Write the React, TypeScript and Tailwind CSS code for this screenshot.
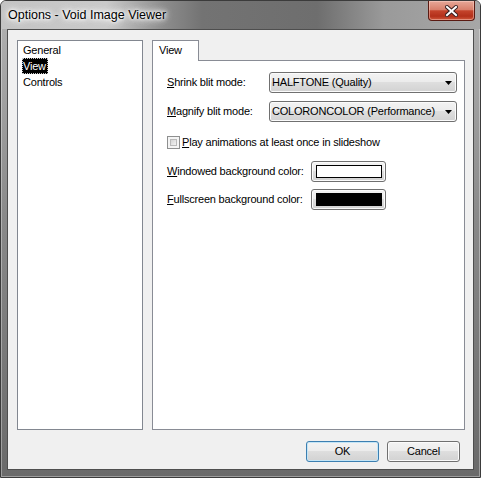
import type { ReactNode } from 'react';

const sans = "font-['Liberation_Sans',Arial,sans-serif]";

function WinButton({ children, className = '', focused = false }: { children: ReactNode; className?: string; focused?: boolean }) {
  return (
    <div
      className={`h-[21px] rounded-[3px] border flex items-center justify-center bg-[linear-gradient(to_bottom,#f3f3f3_0%,#ececec_45%,#dedede_50%,#d2d2d2_100%)] ${
        focused
          ? 'border-[#3c7fb1] shadow-[inset_0_0_0_1px_#c4e5f6]'
          : 'border-[#707070] shadow-[inset_0_0_0_1px_#fbfbfb]'
      } ${className}`}
    >
      {children}
    </div>
  );
}

function Combo({ value }: { value: string }) {
  return (
    <WinButton className="w-[188px] !justify-between pl-[2px] pr-[4px]">
      <span className="text-[11px] text-black leading-none">{value}</span>
      <svg width="7" height="4" viewBox="0 0 7 4">
        <path d="M0 0h7L3.5 4z" fill="#000" />
      </svg>
    </WinButton>
  );
}

function ColorButton({ color }: { color: string }) {
  return (
    <WinButton className="w-[75px]">
      <div className="w-[66px] h-[13px] border border-black" style={{ backgroundColor: color }} />
    </WinButton>
  );
}

export default function App() {
  const items = ['General', 'View', 'Controls'];

  return (
    <div className={`w-[481px] h-[478px] bg-white ${sans}`}>
      <div className="w-full h-full flex flex-col rounded-t-[6px] border border-[#3b3b3b] overflow-hidden bg-[linear-gradient(to_bottom,#b4b4b4_0%,#8a8a8a_45%,#6a6a6a_100%)] shadow-[inset_0_0_0_1px_rgba(255,255,255,0.35)]">
        {/* title bar */}
        <div className="h-[28px] shrink-0 flex justify-between bg-[linear-gradient(to_right,#c4c4c4_0%,#cacaca_22%,#8d8d8d_34%,#737373_42%,#6e6e6e_66%,#9a9a9a_80%,#a7a7a7_100%)]">
          <span className="pl-[7px] self-center pt-[1px] text-[12.5px] text-black [text-shadow:0_0_8px_#fff,0_0_8px_#fff,0_0_5px_#fff,0_0_3px_#fff]">
            Options - Void Image Viewer
          </span>
          <div className="mr-[5px] w-[47px] h-[20px] rounded-b-[4px] border border-t-0 border-[#5a1a12] flex items-center justify-center bg-[linear-gradient(to_bottom,#e6a898_0%,#d8806c_45%,#c4432b_52%,#b3301a_80%,#d0583c_100%)] shadow-[inset_0_0_0_1px_rgba(255,220,210,0.45)]">
            <svg width="13" height="12" viewBox="0 0 13 12">
              <path d="M2 2l9 8M11 2l-9 8" stroke="#3a2020" strokeWidth="4" strokeLinecap="square" />
              <path d="M2 2l9 8M11 2l-9 8" stroke="#ffffff" strokeWidth="2" strokeLinecap="square" />
            </svg>
          </div>
        </div>

        {/* frame sides */}
        <div className="flex-1 px-[6px] pb-[7px]">
          <div className="w-full h-full border border-[#4e4e4e] bg-[#f0f0f0] flex flex-col pt-[10px] pl-[9px] text-[11px] tracking-[-0.2px] text-black">
            <div className="flex">
              <div className="w-[126px] h-[390px] border border-[#828790] bg-white pt-[1px] pl-[4px]">
                {items.map((item) => (
                  <div key={item} className="h-[16px] flex items-center">
                    <span
                      className={`h-[16px] leading-[14px] pl-[0px] pr-[1px] border border-dotted ${
                        item === 'View' ? 'bg-black text-white border-[#c8c8c8]' : 'border-transparent'
                      }`}
                    >
                      {item}
                    </span>
                  </div>
                ))}
              </div>

              <div className="ml-[9px] flex flex-col">
                <div className="relative z-10 -mb-px w-[47px] h-[21px] border border-b-0 border-[#898c95] bg-white pl-[6px] pt-[3px] leading-[13px]">
                  View
                </div>
                <div className="w-[313px] h-[370px] border border-[#898c95] bg-white pl-[14px] pt-[11px]">
                  <div className="flex items-center h-[21px]">
                    <span className="w-[102px]">
                      <u>S</u>hrink blit mode:
                    </span>
                    <Combo value="HALFTONE (Quality)" />
                  </div>
                  <div className="flex items-center h-[21px] mt-[8px]">
                    <span className="w-[102px]">
                      <u>M</u>agnify blit mode:
                    </span>
                    <Combo value="COLORONCOLOR (Performance)" />
                  </div>
                  <div className="flex items-center h-[13px] mt-[14px]">
                    <div className="w-[13px] h-[13px] border border-[#8e8f8f] bg-[#f4f4f4] p-[2px]">
                      <div className="w-full h-full border border-[#b9b9b9] bg-[linear-gradient(135deg,#d4d4d4_0%,#f2f2f2_100%)]" />
                    </div>
                    <span className="ml-[2px]">
                      <u>P</u>lay animations at least once in slideshow
                    </span>
                  </div>
                  <div className="flex items-center h-[21px] mt-[12px]">
                    <span className="w-[144px]">
                      <u>W</u>indowed background color:
                    </span>
                    <ColorButton color="#ffffff" />
                  </div>
                  <div className="flex items-center h-[21px] mt-[7px]">
                    <span className="w-[144px]">
                      <u>F</u>ullscreen background color:
                    </span>
                    <ColorButton color="#000000" />
                  </div>
                </div>
              </div>
            </div>

            <div className="flex justify-end gap-[8px] pr-[13px] mt-[11px]">
              <WinButton focused className="w-[73px]">
                OK
              </WinButton>
              <WinButton className="w-[73px]">Cancel</WinButton>
            </div>
          </div>
        </div>
      </div>
    </div>
  );
}
